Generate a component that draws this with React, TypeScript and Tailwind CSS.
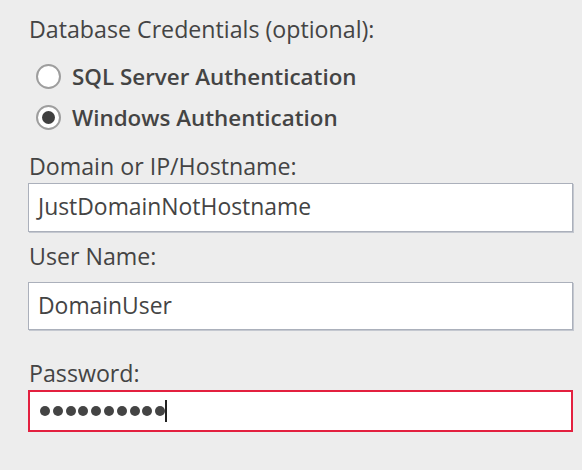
import React from "react";

function Radio({ checked, label }: { checked: boolean; label: string }) {
  return (
    <div className="flex items-center h-[41px]">
      <span className="w-[25px] h-[25px] rounded-full border-2 border-[#9e9e9e] bg-white flex items-center justify-center">
        {checked && <span className="w-[13px] h-[13px] rounded-full bg-[#3f3f3f]" />}
      </span>
      <span className="ml-[11px] text-[22.4px] font-semibold text-[#444]">{label}</span>
    </div>
  );
}

export default function App() {
  const dots = [0, 1, 2, 3, 4, 5, 6, 7, 8, 9];
  return (
    <div
      className="w-[582px] h-[470px] bg-[#ededed] text-[#444] pl-[28px] pr-[9px]"
      style={{ fontFamily: '"Open Sans", "Noto Sans", sans-serif' }}
    >
      <div className="pt-[14px] text-[23.2px] leading-[30px] pl-[1px]">Database Credentials (optional):</div>
      <div className="pl-[8px] mt-[12px]">
        <Radio checked={false} label="SQL Server Authentication" />
        <Radio checked={true} label="Windows Authentication" />
      </div>
      <div className="mt-[13px] text-[23.2px] leading-[30px] font-medium pl-[1px]">Domain or IP/Hostname:</div>
      <div className="mt-[2px] h-[49px] bg-white border border-[#abb0bb] shadow-[1px_1px_0_#c4c8d0] flex items-center pl-[9px] text-[22.9px]">
        JustDomainNotHostname
      </div>
      <div className="mt-[9px] text-[23.2px] leading-[30px] font-medium pl-[1px]">User Name:</div>
      <div className="mt-[11px] h-[48px] bg-white border border-[#abb0bb] shadow-[1px_1px_0_#c4c8d0] flex items-center pl-[9px] text-[22.9px]">
        DomainUser
      </div>
      <div className="mt-[28px] text-[23.2px] leading-[30px] font-medium pl-[1px]">Password:</div>
      <div className="mt-[2px] h-[42px] bg-white border-2 border-[#e3203f] flex items-center pl-[10px]">
        <div className="flex gap-[2.8px]">
          {dots.map((d) => (
            <span key={d} className="w-[10px] h-[10px] rounded-full bg-[#444]" />
          ))}
        </div>
        <span className="w-[2px] h-[22px] bg-[#222]" />
      </div>
    </div>
  );
}
